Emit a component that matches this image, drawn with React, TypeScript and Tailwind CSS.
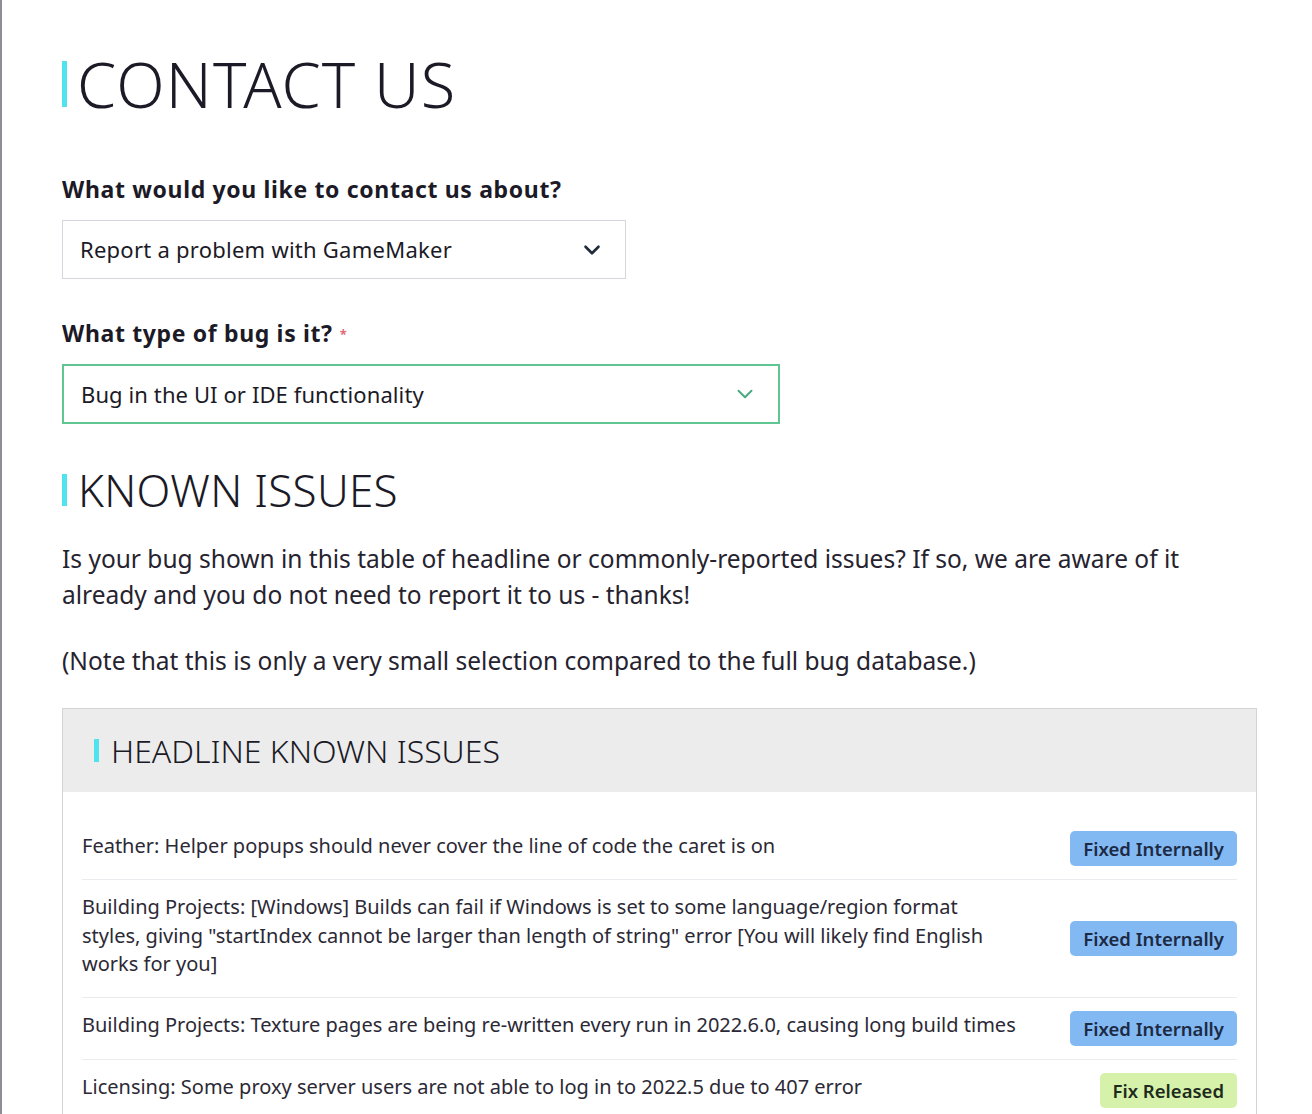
import { ChevronDown } from "lucide-react";

const issues = [
  {
    text: "Feather: Helper popups should never cover the line of code the caret is on",
    status: "Fixed Internally",
  },
  {
    text: 'Building Projects: [Windows] Builds can fail if Windows is set to some language/region format styles, giving "startIndex cannot be larger than length of string" error [You will likely find English works for you]',
    status: "Fixed Internally",
  },
  {
    text: "Building Projects: Texture pages are being re-written every run in 2022.6.0, causing long build times",
    status: "Fixed Internally",
  },
  {
    text: "Licensing: Some proxy server users are not able to log in to 2022.5 due to 407 error",
    status: "Fix Released",
  },
];

function Badge({ status }: { status: string }) {
  const released = status === "Fix Released";
  return (
    <span
      className={
        released
          ? "shrink-0 rounded-[5px] bg-[#d6f1a9] px-[13px] py-[5px] text-[18.5px] font-semibold leading-[25px] text-[#1d2b1d]"
          : "shrink-0 rounded-[5px] bg-[#82b9f3] px-[13px] py-[5px] text-[18.5px] font-semibold leading-[25px] text-[#1d2a44]"
      }
    >
      {status}
    </span>
  );
}

export default function App() {
  return (
    <main
      className="min-h-screen border-l-2 border-[#8e8e99] bg-white text-[#1b1a26]"
      style={{ fontFamily: '"Noto Sans", "Open Sans", sans-serif' }}
    >
      <div className="pl-[60px] pr-[55px] pt-[46px]">
        <h1 className="flex items-center text-[63px] font-light leading-[76px] tracking-[1.2px]">
          <span className="mr-[10px] h-[46px] w-[5px] bg-[#4fe3ee]" />
          CONTACT US
        </h1>

        <label className="mt-[52px] block text-[23px] font-bold leading-[30px] tracking-[0.65px]">
          What would you like to contact us about?
        </label>
        <div className="mt-[16px] flex h-[59px] w-[564px] items-center justify-between border border-[#d6d6dc] pl-[17px] pr-[20px] text-[22px] tracking-[0.25px]">
          <span>Report a problem with GameMaker</span>
          <ChevronDown className="h-[26px] w-[26px] text-[#1d2b3a]" strokeWidth={2.4} />
        </div>

        <label className="mt-[39px] flex items-start text-[23px] font-bold leading-[30px] tracking-[0.65px]">
          What type of bug is it?
          <span className="ml-[7px] mt-[1px] text-[13px] text-[#e06b7a]">*</span>
        </label>
        <div className="mt-[15px] flex h-[60px] w-[718px] items-center justify-between border-2 border-[#5fc591] pl-[17px] pr-[20px] text-[22px] tracking-[0.1px]">
          <span>Bug in the UI or IDE functionality</span>
          <ChevronDown className="h-[26px] w-[26px] text-[#48ab7e]" strokeWidth={1.8} />
        </div>

        <h2 className="mt-[38px] flex items-center text-[44px] font-light leading-[56px] tracking-[0.3px]">
          <span className="mr-[11px] h-[32px] w-[5px] bg-[#4fe3ee]" />
          KNOWN ISSUES
        </h2>

        <p className="mt-[23px] max-w-[1180px] text-[24.5px] leading-[36px] text-[#26232f]">
          Is your bug shown in this table of headline or commonly-reported issues? If so, we are aware of it already and
          you do not need to report it to us - thanks!
        </p>
        <p className="mt-[30px] text-[24.5px] leading-[36px] text-[#26232f]">
          (Note that this is only a very small selection compared to the full bug database.)
        </p>

        <section className="mt-[29px] border border-[#d4d4d8]">
          <div className="flex h-[83px] items-center bg-[#ececed] pl-[31px]">
            <h3 className="flex items-center text-[32px] font-light leading-[40px]">
              <span className="mr-[12px] h-[23px] w-[5px] bg-[#4fe3ee]" />
              HEADLINE KNOWN ISSUES
            </h3>
          </div>
          <div className="px-[19px] pt-[26px]">
            {issues.map((issue, i) => (
              <div
                key={i}
                className="flex items-center justify-between gap-[40px] border-b border-[#ececf0] py-[13px] last:border-b-0"
              >
                <p className="max-w-[936px] pb-[5px] text-[20px] leading-[28.5px] text-[#2b2935]">{issue.text}</p>
                <Badge status={issue.status} />
              </div>
            ))}
          </div>
        </section>
      </div>
    </main>
  );
}
